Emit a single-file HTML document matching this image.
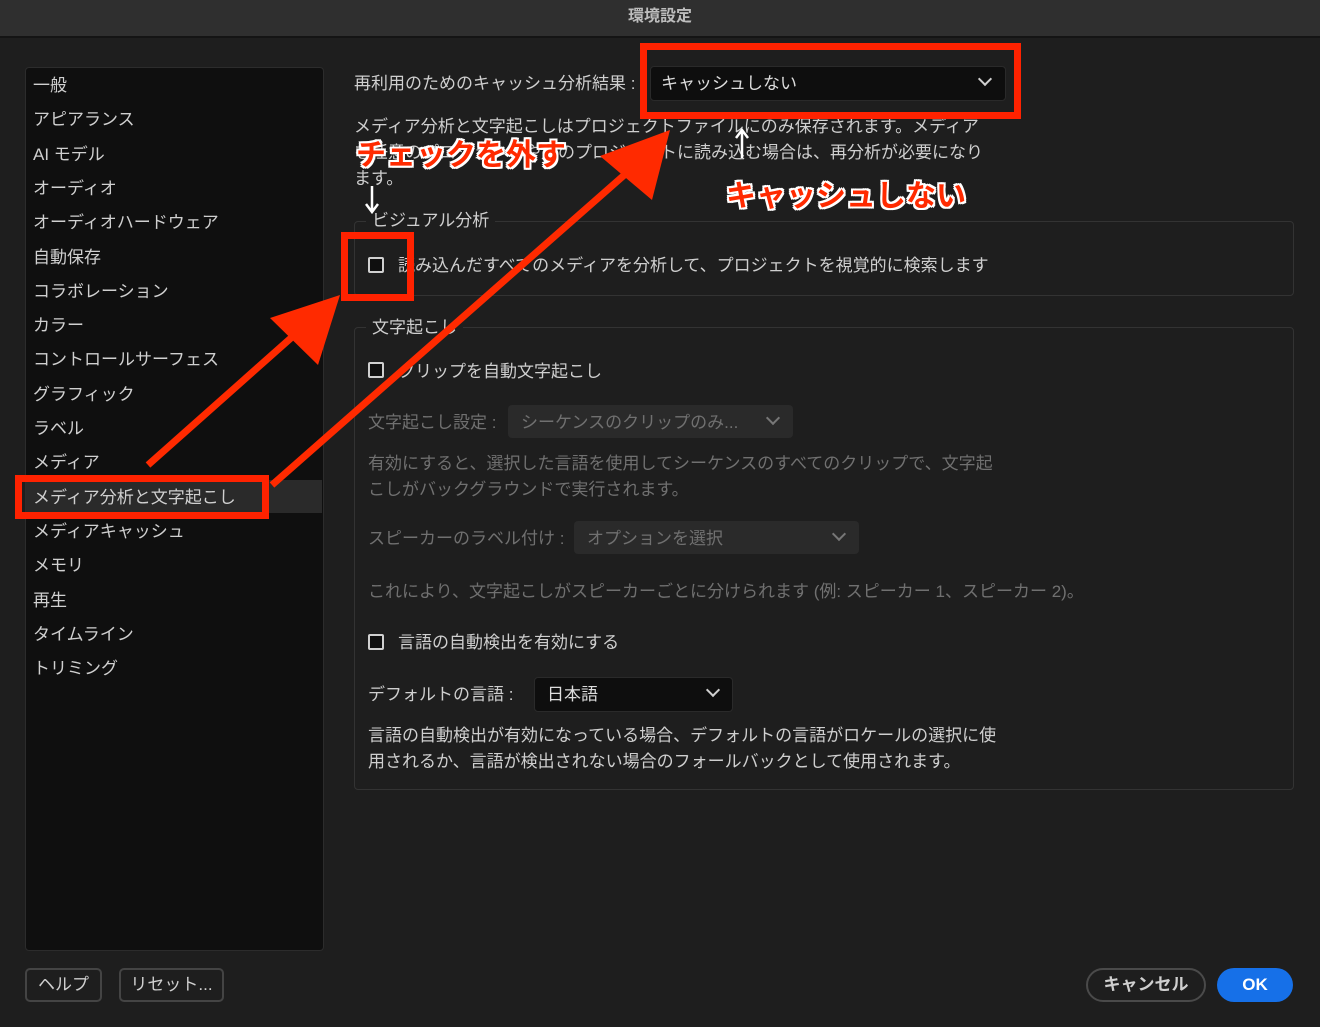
<!DOCTYPE html>
<html><head><meta charset="utf-8">
<style>
body{margin:0;width:1320px;height:1027px;background:#1e1e1e;overflow:hidden;position:relative;font-family:"Liberation Sans","Noto Sans CJK JP",sans-serif;color:#cfcfcf;font-size:17px}
.a{position:absolute;white-space:nowrap;margin-top:-2px}
.title{position:absolute;left:0;top:0;width:1320px;height:36px;background:#2f2f2f;border-bottom:2px solid #141414;text-align:center;line-height:34px;color:#bdbdbd;font-size:16px;font-weight:bold}
.side{position:absolute;left:25px;top:67px;width:297px;height:882px;background:#0f0f0f;border:1px solid #2c2c2c;border-radius:4px}
.si{position:absolute;left:33px;font-size:17px;color:#d0d0d0;margin-top:-2px}
.sel{position:absolute;left:26px;top:480px;width:296px;height:33px;background:#2a2a2a}
.dd{position:absolute;border-radius:4px}
.chev{position:absolute;width:8px;height:8px;border-right:2.5px solid #d0d0d0;border-bottom:2.5px solid #d0d0d0;transform:rotate(45deg)}
.cb{position:absolute;width:12px;height:12px;border:2px solid #d0d0d0;border-radius:2px;background:#0f0f0f}
.grp{position:absolute;border:1px solid #333;border-radius:4px}
.dis{color:#707070}
.btn{position:absolute;border:2px solid #444;border-radius:5px;color:#cfcfcf;text-align:center;font-size:17px}
.red{position:absolute;border:7px solid #ff2200;box-sizing:border-box}
.ann{position:absolute;color:#ff2a00;font-weight:bold;font-size:30px;white-space:nowrap;text-shadow:2px 2px 0 #fff,-2px -2px 0 #fff,2px -2px 0 #fff,-2px 2px 0 #fff,0 2px 0 #fff,0 -2px 0 #fff,2px 0 0 #fff,-2px 0 0 #fff}
</style></head><body>
<div class="title">環境設定</div>
<div class="side"></div>
<div class="sel"></div>
<div class="si" style="top:73px">一般</div>
<div class="si" style="top:107px">アピアランス</div>
<div class="si" style="top:142px">AI モデル</div>
<div class="si" style="top:176px">オーディオ</div>
<div class="si" style="top:210px">オーディオハードウェア</div>
<div class="si" style="top:245px">自動保存</div>
<div class="si" style="top:279px">コラボレーション</div>
<div class="si" style="top:313px">カラー</div>
<div class="si" style="top:347px">コントロールサーフェス</div>
<div class="si" style="top:382px">グラフィック</div>
<div class="si" style="top:416px">ラベル</div>
<div class="si" style="top:450px">メディア</div>
<div class="si" style="top:485px">メディア分析と文字起こし</div>
<div class="si" style="top:519px">メディアキャッシュ</div>
<div class="si" style="top:553px">メモリ</div>
<div class="si" style="top:588px">再生</div>
<div class="si" style="top:622px">タイムライン</div>
<div class="si" style="top:656px">トリミング</div>

<div class="a" style="left:354px;top:71px">再利用のためのキャッシュ分析結果 :</div>
<div class="dd" style="left:650px;top:66px;width:354px;height:33px;background:#0e0e0e;border:1px solid #2a2a2a"></div>
<div class="a" style="left:661px;top:71px;color:#ddd">キャッシュしない</div>
<div class="chev" style="left:980px;top:74px"></div>
<div class="a" style="left:354px;top:116px;line-height:26px;white-space:normal;width:638px">メディア分析と文字起こしはプロジェクトファイルにのみ保存されます。メディアを任意のプロジェクトや別のプロジェクトに読み込む場合は、再分析が必要になります。</div>

<div class="grp" style="left:354px;top:221px;width:938px;height:73px"></div>
<div class="a" style="left:366px;top:208px;background:#1e1e1e;padding:0 6px">ビジュアル分析</div>
<div class="cb" style="left:368px;top:257px"></div>
<div class="a" style="left:398px;top:253px">読み込んだすべてのメディアを分析して、プロジェクトを視覚的に検索します</div>

<div class="grp" style="left:354px;top:327px;width:938px;height:461px"></div>
<div class="a" style="left:366px;top:315px;background:#1e1e1e;padding:0 6px">文字起こし</div>
<div class="cb" style="left:368px;top:362px"></div>
<div class="a" style="left:398px;top:359px">クリップを自動文字起こし</div>
<div class="a dis" style="left:368px;top:410px">文字起こし設定 :</div>
<div class="dd" style="left:508px;top:405px;width:285px;height:33px;background:#2a2a2a"></div>
<div class="a dis" style="left:521px;top:410px">シーケンスのクリップのみ...</div>
<div class="chev" style="left:768px;top:413px;border-color:#777"></div>
<div class="a dis" style="left:368px;top:453px;line-height:26px;white-space:normal;width:640px">有効にすると、選択した言語を使用してシーケンスのすべてのクリップで、文字起こしがバックグラウンドで実行されます。</div>
<div class="a dis" style="left:368px;top:526px">スピーカーのラベル付け :</div>
<div class="dd" style="left:574px;top:521px;width:285px;height:33px;background:#2a2a2a"></div>
<div class="a dis" style="left:587px;top:526px">オプションを選択</div>
<div class="chev" style="left:834px;top:529px;border-color:#777"></div>
<div class="a dis" style="left:368px;top:579px">これにより、文字起こしがスピーカーごとに分けられます (例: スピーカー 1、スピーカー 2)。</div>
<div class="cb" style="left:368px;top:634px"></div>
<div class="a" style="left:398px;top:630px">言語の自動検出を有効にする</div>
<div class="a" style="left:368px;top:682px">デフォルトの言語 :</div>
<div class="dd" style="left:534px;top:677px;width:197px;height:33px;background:#0e0e0e;border:1px solid #2a2a2a"></div>
<div class="a" style="left:547px;top:682px;color:#ddd">日本語</div>
<div class="chev" style="left:708px;top:685px"></div>
<div class="a" style="left:368px;top:725px;line-height:26px;white-space:normal;width:640px">言語の自動検出が有効になっている場合、デフォルトの言語がロケールの選択に使用されるか、言語が検出されない場合のフォールバックとして使用されます。</div>

<div class="btn" style="left:25px;top:968px;width:73px;height:30px;line-height:30px">ヘルプ</div>
<div class="btn" style="left:119px;top:968px;width:101px;height:30px;line-height:30px">リセット...</div>
<div class="btn" style="left:1086px;top:968px;width:116px;height:30px;line-height:30px;border-radius:17px;font-weight:bold;border-color:#4a4a4a">キャンセル</div>
<div class="btn" style="left:1217px;top:968px;width:76px;height:34px;line-height:34px;border:none;border-radius:17px;background:#1670e8;color:#fff;font-weight:bold">OK</div>

<div class="red" style="left:640px;top:43px;width:381px;height:76px"></div>
<div class="red" style="left:341px;top:232px;width:73px;height:69px"></div>
<div class="red" style="left:15px;top:475px;width:254px;height:44px"></div>
<svg style="position:absolute;left:0;top:0" width="1320" height="1027">
<line x1="148" y1="465" x2="300" y2="330" stroke="#ff2a00" stroke-width="7"/>
<polygon points="340,295 270,318 318,365" fill="#ff2a00"/>
<line x1="272" y1="485" x2="630" y2="170" stroke="#ff2a00" stroke-width="7"/>
<polygon points="670,130 600,156 652,200" fill="#ff2a00"/>
<path d="M372 186v24M366 204l6 8 6-8" stroke="#fff" stroke-width="2.5" fill="none"/>
<path d="M742 158v-26M736 138l6-8 6 8" stroke="#fff" stroke-width="2.5" fill="none"/>
</svg>
<div class="ann" style="left:356px;top:130px">チェックを外す</div>
<div class="ann" style="left:726px;top:171px">キャッシュしない</div>
</body></html>
